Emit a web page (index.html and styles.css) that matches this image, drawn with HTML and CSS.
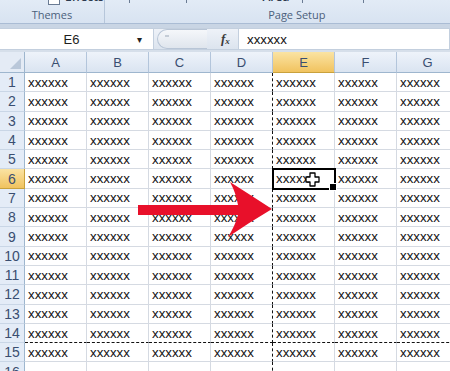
FILE: index.html
```html
<!DOCTYPE html>
<html lang="en">
  <head>
    <meta charset="UTF-8" />
    <title>Page Break Preview</title>
    <link rel="stylesheet" href="styles.css">
  </head>
  <body>
    <div class="ribbon">
      <div class="group themes">
        <div class="tools">
          <span class="box"></span><span class="cut-text">Effects</span>
        </div>
        <div class="label">Themes</div>
      </div>
      <div class="group setup">
        <div class="tools">
          <span class="tick t1"></span><span class="tick t2"></span>
          <span class="cut-text area">Area ▾</span><span class="tick t3"></span>
          <span class="tick t4"></span><span class="cut-text titles">Titles</span>
        </div>
        <div class="label">Page Setup</div>
      </div>
    </div>
    <div class="gap"></div>

    <div class="fbar">
      <div class="namebox">
        <span class="name">E6</span>
        <span class="drop">&#9662;</span>
      </div>
      <div class="fx-area">
        <span class="pill"><span class="dot"></span></span>
        <span class="fx">f<sub>x</sub></span>
      </div>
      <div class="formula">xxxxxx</div>
    </div>

    <div class="sheet">
      <div class="row">
        <div class="corner"></div><div class="ch">A</div><div class="ch">B</div><div class="ch">C</div>
        <div class="ch">D</div><div class="ch on">E</div><div class="ch">F</div><div class="ch">G</div>
      </div>
      <div class="row"><div class="rh">1</div><div class="c">xxxxxx</div><div class="c">xxxxxx</div><div class="c">xxxxxx</div><div class="c">xxxxxx</div><div class="c">xxxxxx</div><div class="c">xxxxxx</div><div class="c">xxxxxx</div></div>
      <div class="row"><div class="rh">2</div><div class="c">xxxxxx</div><div class="c">xxxxxx</div><div class="c">xxxxxx</div><div class="c">xxxxxx</div><div class="c">xxxxxx</div><div class="c">xxxxxx</div><div class="c">xxxxxx</div></div>
      <div class="row"><div class="rh">3</div><div class="c">xxxxxx</div><div class="c">xxxxxx</div><div class="c">xxxxxx</div><div class="c">xxxxxx</div><div class="c">xxxxxx</div><div class="c">xxxxxx</div><div class="c">xxxxxx</div></div>
      <div class="row"><div class="rh">4</div><div class="c">xxxxxx</div><div class="c">xxxxxx</div><div class="c">xxxxxx</div><div class="c">xxxxxx</div><div class="c">xxxxxx</div><div class="c">xxxxxx</div><div class="c">xxxxxx</div></div>
      <div class="row"><div class="rh">5</div><div class="c">xxxxxx</div><div class="c">xxxxxx</div><div class="c">xxxxxx</div><div class="c">xxxxxx</div><div class="c">xxxxxx</div><div class="c">xxxxxx</div><div class="c">xxxxxx</div></div>
      <div class="row">
        <div class="rh on">6</div><div class="c">xxxxxx</div><div class="c">xxxxxx</div><div class="c">xxxxxx</div><div class="c">xxxxxx</div>
        <div class="c sel">xxxxxx
          <svg class="cursor" width="15" height="15" viewBox="0 0 15 15">
            <path d="M5 1h5v4h4v5h-4v4H5v-4H1V5h4z" fill="#fff" stroke="#000" stroke-width="1.3" stroke-linejoin="round"/>
          </svg>
        </div>
        <div class="c">xxxxxx</div><div class="c">xxxxxx</div>
      </div>
      <div class="row"><div class="rh">7</div><div class="c">xxxxxx</div><div class="c">xxxxxx</div><div class="c">xxxxxx</div><div class="c">xxxxxx</div><div class="c">xxxxxx</div><div class="c">xxxxxx</div><div class="c">xxxxxx</div></div>
      <div class="row"><div class="rh">8</div><div class="c">xxxxxx</div><div class="c">xxxxxx</div><div class="c">xxxxxx</div><div class="c">xxxxxx</div><div class="c">xxxxxx</div><div class="c">xxxxxx</div><div class="c">xxxxxx</div></div>
      <div class="row"><div class="rh">9</div><div class="c">xxxxxx</div><div class="c">xxxxxx</div><div class="c">xxxxxx</div><div class="c">xxxxxx</div><div class="c">xxxxxx</div><div class="c">xxxxxx</div><div class="c">xxxxxx</div></div>
      <div class="row"><div class="rh">10</div><div class="c">xxxxxx</div><div class="c">xxxxxx</div><div class="c">xxxxxx</div><div class="c">xxxxxx</div><div class="c">xxxxxx</div><div class="c">xxxxxx</div><div class="c">xxxxxx</div></div>
      <div class="row"><div class="rh">11</div><div class="c">xxxxxx</div><div class="c">xxxxxx</div><div class="c">xxxxxx</div><div class="c">xxxxxx</div><div class="c">xxxxxx</div><div class="c">xxxxxx</div><div class="c">xxxxxx</div></div>
      <div class="row"><div class="rh">12</div><div class="c">xxxxxx</div><div class="c">xxxxxx</div><div class="c">xxxxxx</div><div class="c">xxxxxx</div><div class="c">xxxxxx</div><div class="c">xxxxxx</div><div class="c">xxxxxx</div></div>
      <div class="row"><div class="rh">13</div><div class="c">xxxxxx</div><div class="c">xxxxxx</div><div class="c">xxxxxx</div><div class="c">xxxxxx</div><div class="c">xxxxxx</div><div class="c">xxxxxx</div><div class="c">xxxxxx</div></div>
      <div class="row cut"><div class="rh">14</div><div class="c">xxxxxx</div><div class="c">xxxxxx</div><div class="c">xxxxxx</div><div class="c">xxxxxx</div><div class="c">xxxxxx</div><div class="c">xxxxxx</div><div class="c">xxxxxx</div></div>
      <div class="row"><div class="rh">15</div><div class="c">xxxxxx</div><div class="c">xxxxxx</div><div class="c">xxxxxx</div><div class="c">xxxxxx</div><div class="c">xxxxxx</div><div class="c">xxxxxx</div><div class="c">xxxxxx</div></div>
      <div class="row"><div class="rh">16</div><div class="c"></div><div class="c"></div><div class="c"></div><div class="c"></div><div class="c"></div><div class="c"></div><div class="c"></div></div>
    </div>

    <!-- red callout arrow drawn over the sheet -->
    <svg class="arrow" width="450" height="371" viewBox="0 0 450 371">
      <path d="M138 205H238Q236 193 230 182Q252 196 272 209Q250 222 228 237Q235 226 238 215H138Z" fill="#e8102a"/>
    </svg>
  </body>
</html>
```

FILE: styles.css
```css
* {
  box-sizing: border-box;
}
body {
  margin: 0;
  width: 450px;
  height: 371px;
  overflow: hidden;
  position: relative;
  background-color: #fff;
  font-family: "Liberation Sans", Arial, sans-serif;
}

/* ribbon strip at the top */
.ribbon {
  height: 24px;
  display: flex;
  background: linear-gradient(#e2ebf6, #d8e3f1);
  border-bottom: 1px solid #aabcd4;
}
.group {
  display: flex;
  flex-direction: column;
  justify-content: space-between;
}
.themes {
  width: 118px;
  border-right: 1px solid #b6c6da;
}
.setup {
  flex: 1;
  padding-right: 8px;
}
.tools {
  height: 5px;
  overflow: hidden;
  display: flex;
  font-family: "Open Sans", sans-serif;
  font-size: 12px;
  color: #2c3a4e;
}
.box {
  width: 12px;
  height: 5px;
  margin-left: 48px;
  border: 1px solid #6a7b93;
  border-top: none;
  background: #fff;
}
.cut-text {
  display: block;
  line-height: 12px;
  margin-top: -9px;
  margin-left: 5px;
  font-weight: 600;
}
.tick {
  width: 1px;
  height: 3px;
  background: #6a7b93;
}
.t1 { margin-left: 24px; }
.t2 { margin-left: 56px; }
.area { margin-left: 76px; }
.t3 { margin-left: 12px; }
.t4 { margin-left: 60px; }
.titles { margin-left: 94px; }
.label {
  height: 18px;
  padding-top: 2px;
  line-height: 15px;
  text-align: center;
  font-family: "Open Sans", sans-serif;
  font-size: 11px;
  color: #4b5f7b;
}
.gap {
  height: 4px;
  background: #c9d5e4;
}

/* name box + formula bar */
.fbar {
  height: 24px;
  display: flex;
  border-bottom: 2px solid #d6dfea;
}
.namebox {
  width: 154px;
  display: flex;
  align-items: center;
  background: #fff;
  border: 1px solid #c3cfde;
  border-left: none;
  font-size: 13px;
  color: #1e1e1e;
}
.name {
  flex: 1;
  text-align: center;
  padding-left: 6px;
}
.drop {
  width: 16px;
  font-size: 10px;
  color: #222;
}
.fx-area {
  width: 84px;
  display: flex;
  align-items: center;
  background: linear-gradient(#eef2f8, #dce4ee);
  border-top: 1px solid #c3cfde;
  border-bottom: 1px solid #c3cfde;
}
.pill {
  width: 50px;
  height: 20px;
  margin-left: 3px;
  border: 1px solid #b8c5d6;
  border-right: none;
  border-radius: 10px 0 0 10px;
  background: linear-gradient(#f5f7fa, #dfe5ed);
  position: relative;
}
.dot {
  position: absolute;
  left: 7px;
  top: 5px;
  width: 4px;
  height: 2px;
  background: #c4ccd6;
}
.fx {
  margin-left: 14px;
  font-family: "Liberation Serif", serif;
  font-style: italic;
  font-weight: bold;
  font-size: 13px;
  color: #3a3a3a;
}
.fx sub {
  font-size: 9px;
  vertical-align: -1px;
}
.formula {
  flex: 1;
  display: flex;
  align-items: center;
  padding-left: 8px;
  background: #fff;
  border: 1px solid #c3cfde;
  font-size: 13.3px;
  color: #111;
}

/* the worksheet */
.sheet {
  display: grid;
  grid-template-columns: 25px repeat(7, 62px);
  grid-template-rows: 21px repeat(16, 19.3px);
}
.row {
  display: contents;
}
.corner {
  position: relative;
  background: #e4ebf5;
  border-right: 1px solid #9eb6ce;
  border-bottom: 1px solid #9eb6ce;
}
.corner::after {
  content: "";
  position: absolute;
  right: 3px;
  bottom: 3px;
  border-left: 11px solid transparent;
  border-bottom: 11px solid #b9c7d9;
}
.ch {
  display: flex;
  align-items: center;
  justify-content: center;
  background: linear-gradient(#eef3fa, #dae4f1);
  border-right: 1px solid #b3c5db;
  border-bottom: 1px solid #9eb6ce;
  font-size: 13px;
  color: #3a4e70;
}
.rh {
  display: flex;
  align-items: center;
  justify-content: center;
  background: #e4ecf7;
  border-right: 1px solid #9eb6ce;
  border-bottom: 1px solid #c9d6e6;
  font-size: 14px;
  color: #3a4e70;
}
.ch.on,
.rh.on {
  background: linear-gradient(#fae3a3, #f1c35f);
  border-bottom-color: #c9a13c;
}
.rh.on {
  border-right-color: #c9a13c;
}
.c {
  display: flex;
  align-items: center;
  padding-left: 3px;
  white-space: nowrap;
  overflow: hidden;
  border-right: 1px solid #d5dae2;
  border-bottom: 1px solid #d5dae2;
  font-size: 13.3px;
  color: #111;
}
/* page break lines */
.row .c:nth-child(5) {
  border-right: 1px dashed #111;
}
.row.cut .c {
  border-bottom: 1px dashed #111;
}
.c.sel {
  position: relative;
  overflow: visible;
  outline: 2px solid #000;
  outline-offset: -1px;
  z-index: 1;
}
.c.sel::after {
  content: "";
  position: absolute;
  right: -3px;
  bottom: -3px;
  width: 6px;
  height: 6px;
  background: #000;
  border: 1px solid #fff;
}
.cursor {
  position: absolute;
  left: 32px;
  top: 3px;
}
.arrow {
  position: absolute;
  left: 0;
  top: 0;
  pointer-events: none;
}
```
